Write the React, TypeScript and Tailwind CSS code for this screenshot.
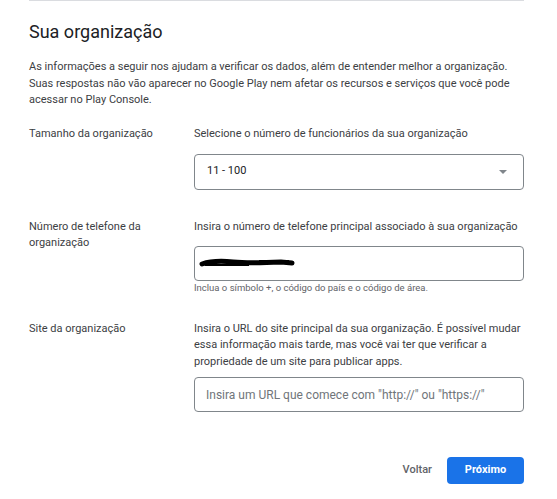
import React from "react";

const Row = ({ label, children }: { label: React.ReactNode; children: React.ReactNode }) => (
  <div className="flex">
    <div className="w-[165px] shrink-0 pr-4 text-[11px] leading-[16px] text-[#3c4043]">{label}</div>
    <div className="flex-1">{children}</div>
  </div>
);

const App = () => {
  return (
    <div className="w-[557px] h-[499px] bg-white font-['Roboto',sans-serif] text-[#202124]">
      <div className="ml-[29px] w-[495px] border-t border-[#dadce0]">
        <h1 className="mt-[19px] text-[18px] leading-[24px] font-normal text-[#202124]">Sua organização</h1>

        <p className="mt-[15px] text-[11px] leading-[16.5px] text-[#3c4043]">
          As informações a seguir nos ajudam a verificar os dados, além de entender melhor a organização.
          Suas respostas não vão aparecer no Google Play nem afetar os recursos e serviços que você pode
          acessar no Play Console.
        </p>

        <div className="mt-[17px]">
          <Row label="Tamanho da organização">
            <div className="text-[11px] leading-[16px] text-[#3c4043]">Selecione o número de funcionários da sua organização</div>
            <div className="mt-[12px] flex h-[36px] items-center justify-between rounded-[4px] border border-[#80868b] pl-[12px] pr-[16px]">
              <span className="text-[11px] text-[#202124]">11 - 100</span>
              <span className="h-0 w-0 border-x-[4px] border-t-[4px] border-x-transparent border-t-[#80868b]"></span>
            </div>
          </Row>
        </div>

        <div className="mt-[29px]">
          <Row label={<>Número de telefone da<br />organização</>}>
            <div className="text-[11px] leading-[16px] text-[#3c4043]">Insira o número de telefone principal associado à sua organização</div>
            <div className="mt-[11px] flex h-[35px] items-center rounded-[4px] border border-[#80868b] pl-[4px]">
              <svg width="96" height="12" viewBox="0 0 96 12">
                <path d="M3 7 C12 4, 24 4, 34 5 S62 6, 82 5 L93 6" stroke="#000" strokeWidth="5" fill="none" strokeLinecap="round" />
                <path d="M6 8 L50 8 M60 4 L90 4" stroke="#000" strokeWidth="2" fill="none" />
              </svg>
            </div>
            <div className="mt-[1px] text-[9.5px] leading-[12px] text-[#5f6368]">Inclua o símbolo +, o código do país e o código de área.</div>
          </Row>
        </div>

        <div className="mt-[27px]">
          <Row label="Site da organização">
            <div className="text-[11px] leading-[16.5px] text-[#3c4043]">
              Insira o URL do site principal da sua organização. É possível mudar essa informação mais tarde, mas você vai ter que verificar a propriedade de um site para publicar apps.
            </div>
            <div className="mt-[7px] flex h-[35px] items-center rounded-[4px] border border-[#80868b] pl-[11px]">
              <span className="text-[12px] text-[#70757a]">Insira um URL que comece com "http://" ou "https://"</span>
            </div>
          </Row>
        </div>

        <div className="mt-[45px] flex items-center justify-end gap-[15px]">
          <button className="text-[11px] font-medium text-[#5f6368]">Voltar</button>
          <button className="h-[27px] w-[77px] rounded-[4px] bg-[#1a73e8] text-[11px] font-bold text-white">Próximo</button>
        </div>
      </div>
    </div>
  );
};

export default App;
